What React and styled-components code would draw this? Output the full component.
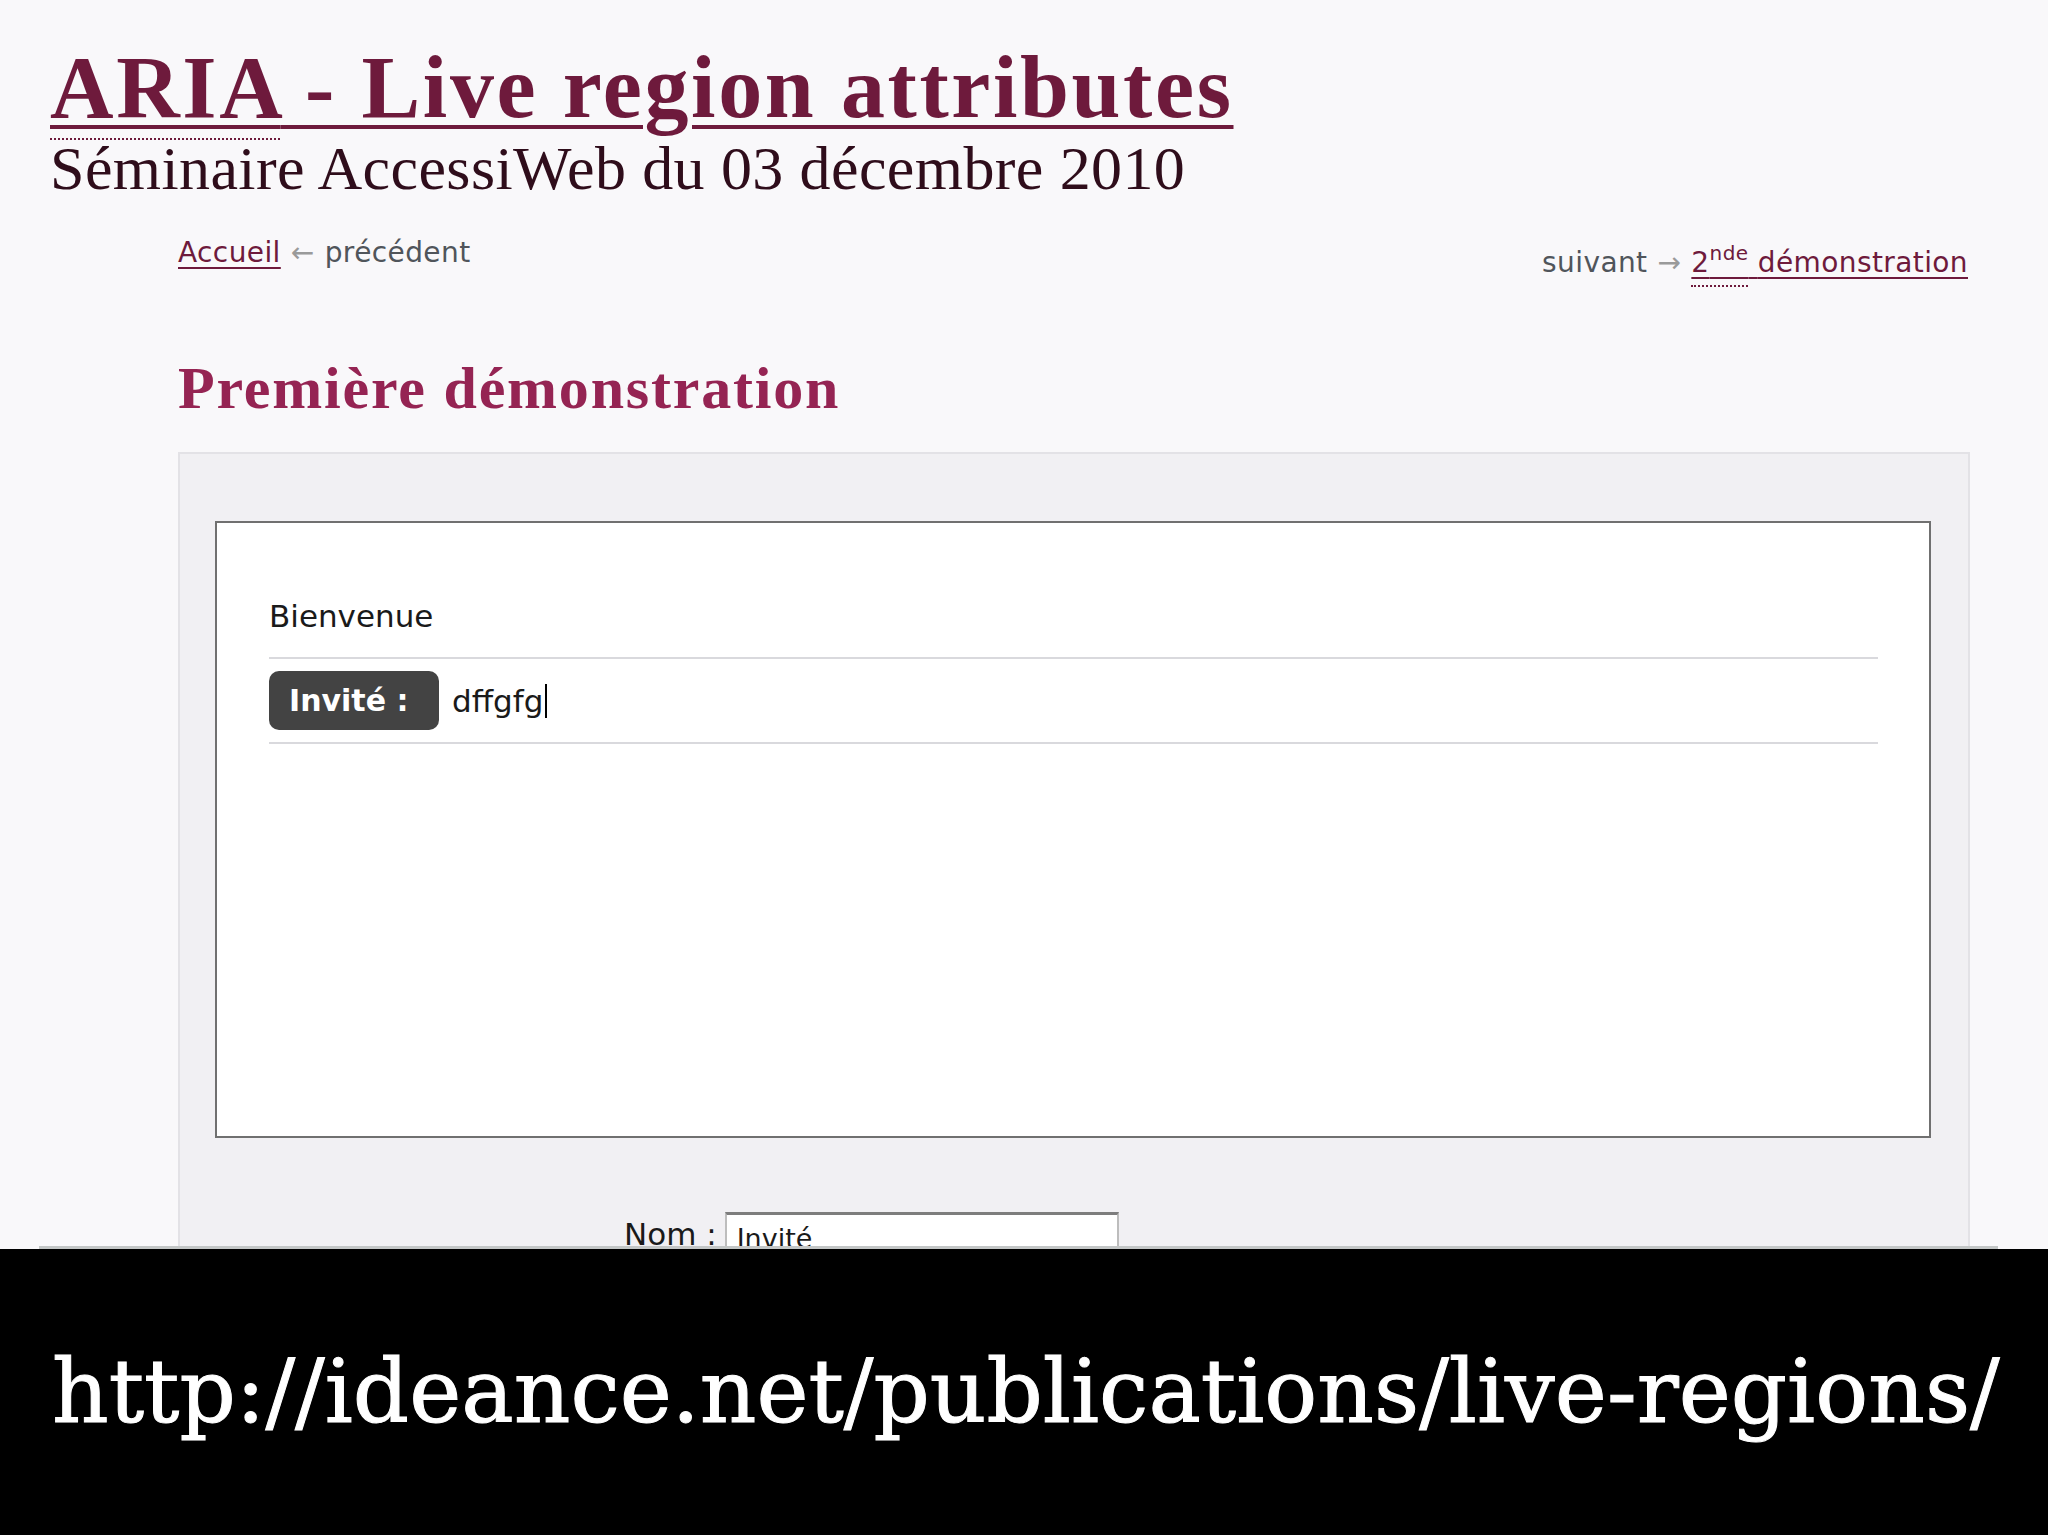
import React from "react";
import styled, { createGlobalStyle } from "styled-components";

const Global = createGlobalStyle`
  html, body { margin: 0; padding: 0; background: #f9f8fa; }
  body { font-family: "DejaVu Sans", Verdana, sans-serif; }
  * { box-sizing: border-box; }
`;

const Screen = styled.div`
  width: 2048px;
  height: 1535px;
  display: flex;
  flex-direction: column;
  overflow: hidden;
  background: #f9f8fa;
`;

const Page = styled.div`
  height: 1246px;
  flex: none;
  overflow: hidden;
  padding: 0 78px 0 50px;
`;

const PageEdge = styled.div`
  flex: none;
  height: 3px;
  margin: 0 50px 0 39px;
  background: #c3c6c6;
`;

const Header = styled.header`
  padding-top: 45px;
`;

const Title = styled.h1`
  margin: 0;
  font-family: "Liberation Serif", "Times New Roman", serif;
  font-weight: 700;
  font-size: 88px;
  line-height: 85px;
  letter-spacing: 2.6px;
  color: #6e1a3c;
`;

const TitleLink = styled.a`
  color: inherit;
  text-decoration: underline;
  text-decoration-thickness: 4px;
  text-underline-offset: 8px;
`;

const Abbr = styled.abbr`
  text-decoration: none;
  border-bottom: 2px dotted ${(p) => p.$color || "#6e1a3c"};
  padding-bottom: ${(p) => p.$pad || 0}px;
`;

const Subtitle = styled.p`
  margin: 7px 0 0;
  font-family: "Liberation Serif", "Times New Roman", serif;
  font-size: 62px;
  line-height: 62px;
  letter-spacing: 0.4px;
  color: #2f0d1b;
`;

const Content = styled.main`
  margin-left: 128px;
  width: 1792px;
`;

const Nav = styled.nav`
  margin-top: 37px;
  display: flex;
  justify-content: space-between;
  align-items: flex-start;
  padding-right: 2px;
  font-size: 28px;
  line-height: 34px;
  letter-spacing: 0.4px;
  color: #50555b;
`;

const NavGroup = styled.div`
  margin-top: ${(p) => p.$offset || 0}px;
`;

const NavLink = styled.a`
  color: #6e1a3c;
  text-decoration: underline;
  text-decoration-thickness: 2px;
  text-underline-offset: 5px;
`;

const Arrow = styled.span`
  color: #9a9a9a;
  margin: 0 10px;
`;

const Sup = styled.sup`
  font-size: 20px;
  line-height: 0;
  vertical-align: 12px;
`;

const SectionTitle = styled.h2`
  margin: 80px 0 0;
  font-family: "Liberation Serif", "Times New Roman", serif;
  font-weight: 700;
  font-size: 60px;
  line-height: 57px;
  letter-spacing: 1.8px;
  color: #952453;
`;

const Panel = styled.section`
  margin-top: 35px;
  background: #f1f0f3;
  border: 2px solid #e3e2e6;
  padding: 67px 37px 200px 35px;
`;

const LiveBox = styled.div`
  height: 617px;
  background: #ffffff;
  border: 2px solid #707070;
  padding: 75px 51px 0 52px;
`;

const Welcome = styled.div`
  font-size: 31px;
  line-height: 36px;
  color: #1a1a1a;
  padding-bottom: 23px;
  border-bottom: 2px solid #d9d9dd;
`;

const MessageRow = styled.div`
  display: flex;
  align-items: center;
  gap: 13px;
  margin-top: 12px;
  padding-bottom: 12px;
  border-bottom: 2px solid #d9d9dd;
`;

const Badge = styled.span`
  width: 170px;
  height: 59px;
  padding-left: 20px;
  border-radius: 10px;
  background: #434343;
  color: #ffffff;
  font-weight: 700;
  font-size: 30px;
  line-height: 59px;
`;

const Message = styled.span`
  display: flex;
  align-items: center;
  font-size: 31px;
  line-height: 40px;
  color: #1a1a1a;
`;

const Caret = styled.span`
  width: 2px;
  height: 34px;
  margin-left: 2px;
  background: #000;
`;

const FormRow = styled.div`
  display: flex;
  align-items: flex-start;
  gap: 8px;
  margin-top: 74px;
  padding-left: 409px;
`;

const Label = styled.label`
  font-size: 31px;
  line-height: 36px;
  color: #1a1a1a;
  padding-top: 4px;
`;

const Input = styled.div`
  width: 394px;
  height: 48px;
  background: #ffffff;
  border: 2px solid #bdbdbd;
  border-top: 3px solid #7d7d7d;
  padding: 6px 10px 0;
  font-size: 27px;
  line-height: 36px;
  color: #1a1a1a;
`;

const Footer = styled.footer`
  flex: 1;
  background: #000;
  padding: 99px 0 0 52px;
`;

const Url = styled.p`
  margin: 0;
  font-family: "DejaVu Serif", serif;
  font-size: 88px;
  line-height: 88px;
  color: #ffffff;
  white-space: nowrap;
  -webkit-text-stroke: 1px #ffffff;
`;

export default function App() {
  return (
    <>
      <Global />
      <Screen>
        <Page>
          <Header>
            <Title>
              <TitleLink>
                <Abbr $pad={2}>ARIA</Abbr> - Live region attributes
              </TitleLink>
            </Title>
            <Subtitle>Séminaire AccessiWeb du 03 décembre 2010</Subtitle>
          </Header>
          <Content>
            <Nav>
              <NavGroup>
                <NavLink>Accueil</NavLink>
                <Arrow>←</Arrow>précédent
              </NavGroup>
              <NavGroup $offset={10}>
                suivant<Arrow>→</Arrow>
                <NavLink>
                  <Abbr $pad={6}>
                    2<Sup>nde</Sup>
                  </Abbr>{" "}
                  démonstration
                </NavLink>
              </NavGroup>
            </Nav>
            <SectionTitle>Première démonstration</SectionTitle>
            <Panel>
              <LiveBox>
                <Welcome>Bienvenue</Welcome>
                <MessageRow>
                  <Badge>Invité :</Badge>
                  <Message>
                    dffgfg
                    <Caret />
                  </Message>
                </MessageRow>
              </LiveBox>
              <FormRow>
                <Label>Nom :</Label>
                <Input>Invité</Input>
              </FormRow>
            </Panel>
          </Content>
        </Page>
        <PageEdge />
        <Footer>
          <Url>http://ideance.net/publications/live-regions/</Url>
        </Footer>
      </Screen>
    </>
  );
}
